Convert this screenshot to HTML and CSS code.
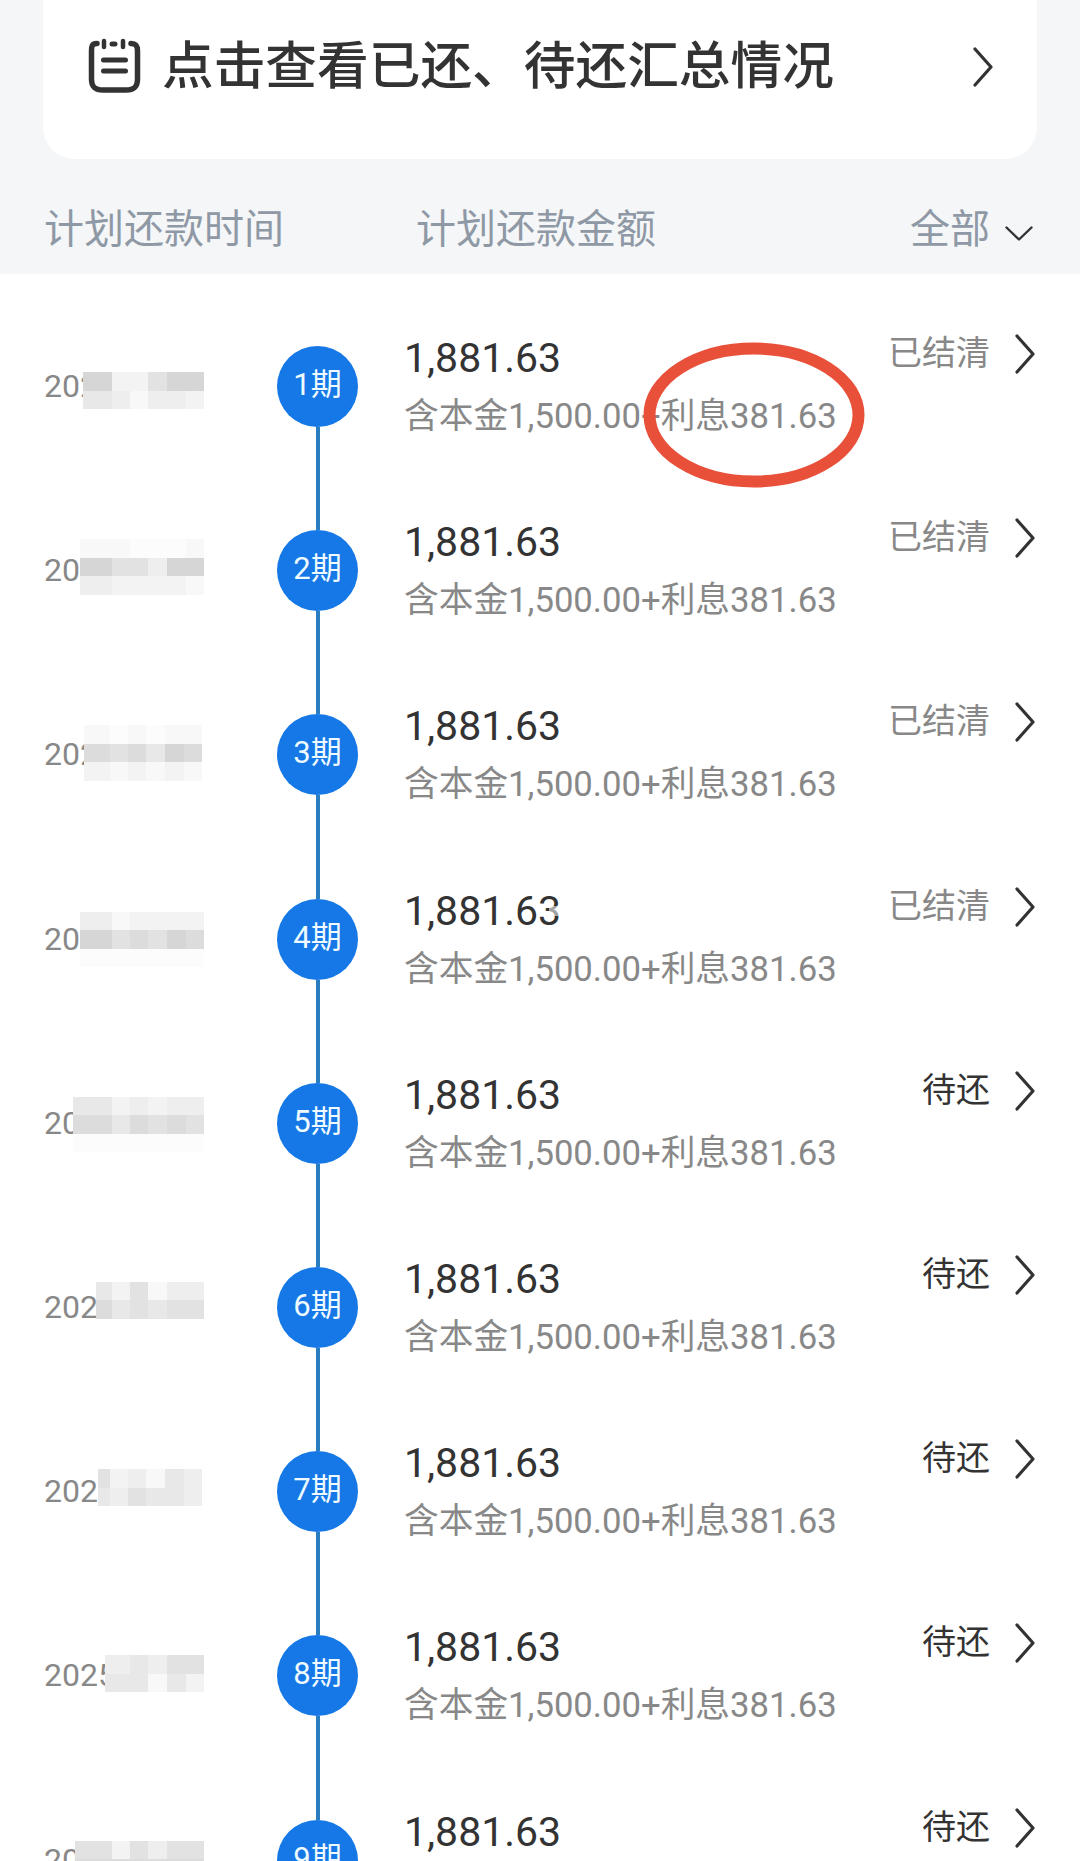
FILE: index.html
```html
<!DOCTYPE html>
<html lang="zh-CN">
<head>
<meta charset="utf-8">
<title>还款计划</title>
<link rel="stylesheet" href="styles.css">
</head>
<body>
<svg class="defs" width="0" height="0" aria-hidden="true">
  <symbol id="chev" viewBox="0 0 22 40"><path d="M4 2 L20 20 L4 38" fill="none" stroke="currentColor" stroke-width="3.2" stroke-linecap="round" stroke-linejoin="round"/></symbol>
</svg>
<section class="card">
  <svg class="note" viewBox="0 0 60 62" aria-hidden="true">
    <path d="M13 9.5C8 9.5 7.5 12 7.5 17V45C7.5 53 11 56 19 56H42C50 56 53.5 53 53.5 45V17C53.5 12 52 9.5 47 9.5" fill="none" stroke="#333" stroke-width="5.5" stroke-linecap="round"/>
    <path d="M20 7V13M39 7V13" stroke="#333" stroke-width="4.5" stroke-linecap="round"/>
    <path d="M28 10H31" stroke="#333" stroke-width="5" stroke-linecap="round"/>
    <path d="M19.5 26H41.5M19.5 37H41.5" stroke="#333" stroke-width="5" stroke-linecap="round"/>
  </svg>
  <span class="card-title">点击查看已还、待还汇总情况</span>
  <svg class="card-chev"><use href="#chev"/></svg>
</section>
<header class="head">
  <span class="head-time">计划还款时间</span>
  <span class="head-amount">计划还款金额</span>
  <span class="head-filter">全部
    <svg class="filter-chev" viewBox="0 0 28 15" aria-hidden="true"><path d="M1.5 1.5 L14 13.5 L26.5 1.5" fill="none" stroke="#333" stroke-width="2.4" stroke-linecap="round" stroke-linejoin="round"/></svg>
  </span>
</header>
<main class="list">
  <article class="row">
    <div class="date">2025<div class="mosaic m1"><i class="a"></i><i class="f"></i><i class="f"></i><i class="c"></i><i class="a"></i><i class="a"></i><i class="d"></i><i class="e"></i><i class="g"></i><i class="e"></i><i class="e"></i><i class="f"></i></div></div>
    <div class="node"><span class="dot">1期</span><span class="stem"></span></div>
    <div class="main"><div class="amount">1,881.63</div><div class="sub">含本金1,500.00+利息381.63</div></div>
    <div class="status done">已结清</div><svg class="chev"><use href="#chev"/></svg>
  </article>
  <article class="row">
    <div class="date">2025<div class="mosaic m2"><i class="g"></i><i class="g"></i><i class="h"></i><i class="h"></i><i class="h"></i><i class="g"></i><i class="a"></i><i class="c"></i><i class="c"></i><i class="e"></i><i class="a"></i><i class="a"></i><i class="e"></i><i class="f"></i><i class="f"></i><i class="f"></i><i class="f"></i><i class="g"></i></div></div>
    <div class="node"><span class="dot">2期</span><span class="stem"></span></div>
    <div class="main"><div class="amount">1,881.63</div><div class="sub">含本金1,500.00+利息381.63</div></div>
    <div class="status done">已结清</div><svg class="chev"><use href="#chev"/></svg>
  </article>
  <article class="row">
    <div class="date">2025<div class="mosaic m3"><i class="g"></i><i class="h"></i><i class="g"></i><i class="h"></i><i class="g"></i><i class="g"></i><i class="b"></i><i class="c"></i><i class="b"></i><i class="d"></i><i class="a"></i><i class="b"></i><i class="f"></i><i class="g"></i><i class="f"></i><i class="g"></i><i class="f"></i><i class="g"></i></div></div>
    <div class="node"><span class="dot">3期</span><span class="stem"></span></div>
    <div class="main"><div class="amount">1,881.63</div><div class="sub">含本金1,500.00+利息381.63</div></div>
    <div class="status done">已结清</div><svg class="chev"><use href="#chev"/></svg>
  </article>
  <article class="row">
    <div class="date">2025<div class="mosaic m4"><i class="e"></i><i class="g"></i><i class="f"></i><i class="f"></i><i class="f"></i><i class="f"></i><i class="a"></i><i class="c"></i><i class="b"></i><i class="c"></i><i class="a"></i><i class="b"></i><i class="h"></i><i class="h"></i><i class="h"></i><i class="h"></i><i class="h"></i><i class="h"></i></div></div>
    <div class="node"><span class="dot">4期</span><span class="stem"></span></div>
    <div class="main"><div class="amount">1,881.63<span class="smudge"></span></div><div class="sub">含本金1,500.00+利息381.63</div></div>
    <div class="status done">已结清</div><svg class="chev"><use href="#chev"/></svg>
  </article>
  <article class="row">
    <div class="date">2025<div class="mosaic m5"><i class="d"></i><i class="f"></i><i class="e"></i><i class="f"></i><i class="e"></i><i class="e"></i><i class="b"></i><i class="d"></i><i class="b"></i><i class="c"></i><i class="b"></i><i class="c"></i><i class="h"></i><i class="h"></i><i class="h"></i><i class="h"></i><i class="h"></i><i class="h"></i></div></div>
    <div class="node"><span class="dot">5期</span><span class="stem"></span></div>
    <div class="main"><div class="amount">1,881.63</div><div class="sub">含本金1,500.00+利息381.63</div></div>
    <div class="status due">待还</div><svg class="chev"><use href="#chev"/></svg>
  </article>
  <article class="row">
    <div class="date">2025<div class="mosaic m6"><i class="d"></i><i class="f"></i><i class="c"></i><i class="g"></i><i class="e"></i><i class="e"></i><i class="b"></i><i class="d"></i><i class="c"></i><i class="d"></i><i class="c"></i><i class="c"></i></div></div>
    <div class="node"><span class="dot">6期</span><span class="stem"></span></div>
    <div class="main"><div class="amount">1,881.63</div><div class="sub">含本金1,500.00+利息381.63</div></div>
    <div class="status due">待还</div><svg class="chev"><use href="#chev"/></svg>
  </article>
  <article class="row">
    <div class="date">2025<div class="mosaic m7"><i class="c"></i><i class="f"></i><i class="e"></i><i class="g"></i><i class="d"></i><i class="e"></i><i class="d"></i><i class="e"></i><i class="c"></i><i class="d"></i><i class="d"></i><i class="e"></i></div></div>
    <div class="node"><span class="dot">7期</span><span class="stem"></span></div>
    <div class="main"><div class="amount">1,881.63</div><div class="sub">含本金1,500.00+利息381.63</div></div>
    <div class="status due">待还</div><svg class="chev"><use href="#chev"/></svg>
  </article>
  <article class="row">
    <div class="date">2025<div class="mosaic m8"><i class="e"></i><i class="e"></i><i class="d"></i><i class="e"></i><i class="c"></i><i class="c"></i><i class="d"></i><i class="d"></i><i class="d"></i><i class="g"></i><i class="d"></i><i class="f"></i></div></div>
    <div class="node"><span class="dot">8期</span><span class="stem"></span></div>
    <div class="main"><div class="amount">1,881.63</div><div class="sub">含本金1,500.00+利息381.63</div></div>
    <div class="status due">待还</div><svg class="chev"><use href="#chev"/></svg>
  </article>
  <article class="row">
    <div class="date">2025<div class="mosaic m9"><i class="c"></i><i class="f"></i><i class="c"></i><i class="e"></i><i class="c"></i><i class="c"></i><i class="b"></i><i class="b"></i><i class="b"></i><i class="b"></i><i class="b"></i><i class="b"></i></div></div>
    <div class="node"><span class="dot">9期</span><span class="stem"></span></div>
    <div class="main"><div class="amount">1,881.63</div><div class="sub">含本金1,500.00+利息381.63</div></div>
    <div class="status due">待还</div><svg class="chev"><use href="#chev"/></svg>
  </article>
  <svg class="circle-mark" viewBox="0 0 222 146" aria-hidden="true"><ellipse cx="111" cy="73" rx="104.500" ry="66.500" fill="none" stroke="#e8503a" stroke-width="12"/></svg>
</main>
</body>
</html>
```
FILE: styles.css
```css
* { box-sizing: border-box; }
html, body { margin: 0; padding: 0; }
body {
  width: 1080px;
  height: 1861px;
  overflow: hidden;
  background: #f4f6f8;
  font-family: Roboto, "Noto Sans CJK SC", sans-serif;
  color: #333;
}
.defs { display: block; height: 0; }

.card {
  display: flex;
  align-items: center;
  height: 159px;
  margin: 0 43px;
  padding: 0 44px 29px 41px;
  background: #fff;
  border-radius: 0 0 32px 32px;
}
.note { width: 60px; height: 62px; flex: none; }
.card-title {
  margin: 4px 0 0 18px;
  font-size: 51.7px;
  line-height: 60px;
  font-weight: 500;
  color: #333;
  white-space: nowrap;
}
.card-chev { width: 22px; height: 40px; margin: 3px 0 0 auto; color: #333; flex: none; }

.head {
  display: flex;
  align-items: center;
  height: 115px;
  padding: 27px 47px 0 44px;
  font-size: 40px;
  line-height: 50px;
  color: #8f99a5;
  white-space: nowrap;
}
.head-time { width: 372px; }
.head-filter { margin-left: auto; display: flex; align-items: center; gap: 15px; }
.filter-chev { width: 28px; height: 15px; margin-top: 6px; }

.list {
  position: relative;
  height: 1587px;
  padding-top: 56px;
  background: #fff;
}
.row {
  display: flex;
  align-items: flex-start;
  height: 184.2px;
  padding: 0 45px 0 44px;
}
.date {
  position: relative;
  width: 233px;
  height: 81px;
  margin-top: 16px;
  flex: none;
  font-size: 32px;
  line-height: 81px;
  color: #888;
}
.mosaic {
  position: absolute;
  right: 73px;
  display: grid;
  grid-template-columns: 1fr 18px 18px 19px 19px 18px;
  grid-auto-rows: 18.5px;
}
.mosaic i { display: block; }
.m1 { left: 39px; top: 26px; }
.m2 { left: 36px; top: 9px; }
.m3 { left: 40px; top: 11px; right: 75px; }
.m4 { left: 36px; top: 13px; }
.m5 { left: 29px; top: 14px; }
.m6 { left: 52px; top: 15px; }
.m7 { left: 54px; top: 18px; right: 75px; }
.m8 { left: 61px; top: 20px; }
.m9 { left: 31px; top: 21px; }
.a { background: #d6d6d6; }
.b { background: #dcdcdc; }
.c { background: #e2e2e2; }
.d { background: #e8e8e8; }
.e { background: #eeeeee; }
.f { background: #f3f3f3; }
.g { background: #f8f8f8; }
.h { background: #fcfcfc; }

.node {
  display: flex;
  flex-direction: column;
  align-items: center;
  width: 81px;
  height: 100%;
  flex: none;
}
.node::before {
  content: "";
  flex: 0 0 16px;
  width: 4px;
  margin-left: 1px;
  background: #2a7cc0;
}
.row:first-child .node::before { background: transparent; }
.dot {
  flex: 0 0 81px;
  width: 81px;
  border-radius: 50%;
  background: #1578e6;
  color: #eefaff;
  font-size: 31px;
  line-height: 78px;
  text-align: center;
  white-space: nowrap;
}
.stem {
  flex: 1;
  width: 4px;
  margin-left: 1px;
  background: #2a7cc0;
}
.main { margin-left: 46px; flex: 1; min-width: 0; }
.amount {
  position: relative;
  font-size: 41px;
  line-height: 56px;
  color: #333;
}
.sub {
  margin-top: 5px;
  font-size: 34.7px;
  line-height: 50px;
  color: #888;
  white-space: nowrap;
}
.smudge {
  position: absolute;
  left: 145px;
  top: 23px;
  width: 14px;
  height: 10px;
  background: #fff;
  opacity: .55;
}
.status {
  font-size: 34px;
  line-height: 46px;
  white-space: nowrap;
}
.done { color: #888; }
.due { color: #333; }
.chev {
  width: 22px;
  height: 40px;
  margin: 4px 0 0 23px;
  color: #333;
  flex: none;
}
.circle-mark {
  position: absolute;
  left: 643px;
  top: 68px;
  width: 222px;
  height: 146px;
}
```
